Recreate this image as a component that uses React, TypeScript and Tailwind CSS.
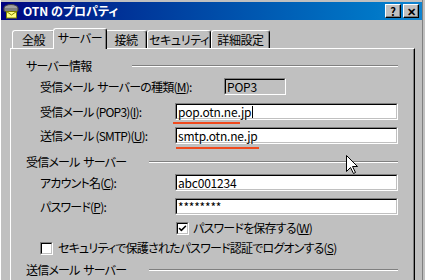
import { Check } from 'lucide-react';

const Field = ({ children, grey = false }: { children?: React.ReactNode; grey?: boolean }) => (
  <div className="border border-t-[#808080] border-l-[#808080] border-r-white border-b-white">
    <div
      className={`h-[15px] border border-t-black border-l-black border-r-[#c0c0c0] border-b-[#c0c0c0] pl-[1px] flex items-center text-[12px] leading-none tracking-[-0.2px] ${
        grey ? 'bg-[#c0c0c0]' : 'bg-white'
      }`}
    >
      {children}
    </div>
  </div>
);

const Box = ({ checked = false }: { checked?: boolean }) => (
  <div className="w-[13px] h-[13px] border border-t-[#808080] border-l-[#808080] border-r-white border-b-white shrink-0">
    <div className="w-full h-full border border-t-black border-l-black border-r-[#c0c0c0] border-b-[#c0c0c0] bg-white flex items-center justify-center">
      {checked && <Check size={9} strokeWidth={4} className="text-black" />}
    </div>
  </div>
);

const Group = ({ label, width }: { label: string; width: string }) => (
  <div className="h-[16px] flex items-center">
    <span className={`${width} shrink-0 whitespace-pre`}>{label}</span>
    <div className="flex-1 h-[2px] border-t border-t-[#808080] border-b border-b-white" />
  </div>
);

const Tab = ({ label, width, active = false }: { label: string; width: string; active?: boolean }) => (
  <div
    className={`${width} whitespace-nowrap flex items-center justify-center rounded-t-[3px] border-l border-t border-white border-r border-r-black shadow-[inset_-1px_0_#808080] bg-[#c0c0c0] ${
      active ? 'h-[21px] -mx-[2px] -mb-[1px] relative z-10 pb-[2px]' : 'h-[18px]'
    }`}
  >
    {label}
  </div>
);

const TitleButton = ({ children }: { children: React.ReactNode }) => (
  <div className="w-[16px] h-[14px] bg-[#c0c0c0] border border-t-white border-l-white border-r-black border-b-black shadow-[inset_-1px_-1px_#808080] flex items-center justify-center text-black text-[11px] font-bold leading-none">
    {children}
  </div>
);

export default function App() {
  return (
    <div className="w-[425px] h-[280px] overflow-hidden bg-[#c0c0c0] relative font-['Noto_Sans_CJK_JP',sans-serif] text-[12px] text-black [font-feature-settings:'palt'] tracking-[-0.4px]">
      <div className="w-[423px] h-[280px] border-l border-l-white border-r border-r-[#808080] pt-[2px]">
        {/* Title bar */}
        <div className="h-[18px] flex items-center pl-[2px] pr-[3px] bg-gradient-to-r from-[#000080] to-[#1084d0]">
          <svg width="16" height="16" viewBox="0 0 16 16" className="shrink-0">
            <ellipse cx="8" cy="5" rx="7" ry="3.5" fill="#a0a0a0" stroke="#404040" strokeWidth="1" />
            <path d="M1 5 L1 8 Q8 12 15 8 L15 5" fill="#808080" stroke="#404040" strokeWidth="1" />
            <rect x="3.5" y="8.5" width="10" height="6.5" fill="#ffff80" stroke="#808000" strokeWidth="1" />
            <path d="M3.5 8.5 L8.5 12 L13.5 8.5" fill="none" stroke="#808000" strokeWidth="1" />
          </svg>
          <span className="ml-[4px] text-white font-bold text-[12px] leading-none tracking-[0px]">OTN のプロパティ</span>
          <div className="flex-1" />
          <div className="flex gap-[2px] tracking-normal">
            <TitleButton>?</TitleButton>
            <TitleButton>✕</TitleButton>
          </div>
        </div>

        {/* Tabs */}
        <div className="mt-[8px] pl-[11px] flex items-end h-[20px]">
          <Tab label="全般" width="w-[43px]" />
          <Tab label="サーバー" width="w-[54px]" active />
          <Tab label="接続" width="w-[42px]" />
          <Tab label="セキュリティ" width="w-[64px]" />
          <Tab label="詳細設定" width="w-[59px]" />
        </div>

        {/* Panel */}
        <div className="ml-[9px] w-[405px] h-[240px] border-l border-t border-white border-r border-r-black shadow-[inset_-1px_0_#808080] pt-[9px] pl-[15px] pr-[16px] tracking-[-0.8px]">
          <Group label="サーバー情報" width="w-[106px]" />

          <div className="pl-[14px] flex flex-col">
            <div className="mt-[4px] h-[17px] flex items-center">
              <span className="w-[184px] shrink-0 whitespace-pre">
                受信メール  サーバーの種類(<span className="underline">M</span>):
              </span>
              <div className="w-[62px]">
                <Field grey>POP3</Field>
              </div>
            </div>

            <div className="mt-[8px] h-[17px] flex items-center">
              <span className="w-[135px] shrink-0 whitespace-nowrap">
                受信メール (POP3)(<span className="underline">I</span>):
              </span>
              <div className="w-[223px] relative">
                <Field>
                  pop.otn.ne.jp<span className="w-px h-[12px] bg-black ml-px" />
                </Field>
                <div className="absolute left-[-2px] top-[19px] w-[67px] h-[2px] bg-[#f04a1e]" />
              </div>
            </div>

            <div className="mt-[7px] h-[17px] flex items-center">
              <span className="w-[135px] shrink-0 whitespace-nowrap">
                送信メール (SMTP)(<span className="underline">U</span>):
              </span>
              <div className="w-[223px] relative">
                <Field>smtp.otn.ne.jp</Field>
                <div className="absolute left-[1px] top-[20px] w-[83px] h-[2px] bg-[#f04a1e]" />
              </div>
            </div>
          </div>

          <div className="mt-[10px]">
            <Group label="受信メール  サーバー" width="w-[123px]" />
          </div>

          <div className="pl-[14px] flex flex-col">
            <div className="mt-[4px] h-[17px] flex items-center">
              <span className="w-[135px] shrink-0">
                アカウント名(<span className="underline">C</span>):
              </span>
              <div className="w-[223px]">
                <Field>abc001234</Field>
              </div>
            </div>

            <div className="mt-[7px] h-[17px] flex items-center">
              <span className="w-[135px] shrink-0">
                パスワード(<span className="underline">P</span>):
              </span>
              <div className="w-[223px]">
                <Field>********</Field>
              </div>
            </div>

            <div className="mt-[5px] h-[16px] flex items-center pl-[136px] gap-[4px]">
              <Box checked />
              <span className="whitespace-nowrap">
                パスワードを保存する(<span className="underline">W</span>)
              </span>
            </div>

            <div className="mt-[4px] h-[16px] flex items-center gap-[5px]">
              <Box />
              <span className="whitespace-nowrap">
                セキュリティで保護されたパスワード認証でログオンする(<span className="underline">S</span>)
              </span>
            </div>
          </div>

          <div className="mt-[6px]">
            <Group label="送信メール  サーバー" width="w-[123px]" />
          </div>
        </div>
      </div>

      {/* Mouse pointer */}
      <svg width="13" height="20" viewBox="0 0 13 20" className="absolute left-[346px] top-[155px]">
        <path d="M0.5 0.5 L0.5 16.5 L4.5 12.5 L7.5 18.5 L9.5 17.5 L6.5 11.5 L11.5 11.5 Z" fill="white" stroke="black" strokeWidth="1" />
      </svg>
    </div>
  );
}
